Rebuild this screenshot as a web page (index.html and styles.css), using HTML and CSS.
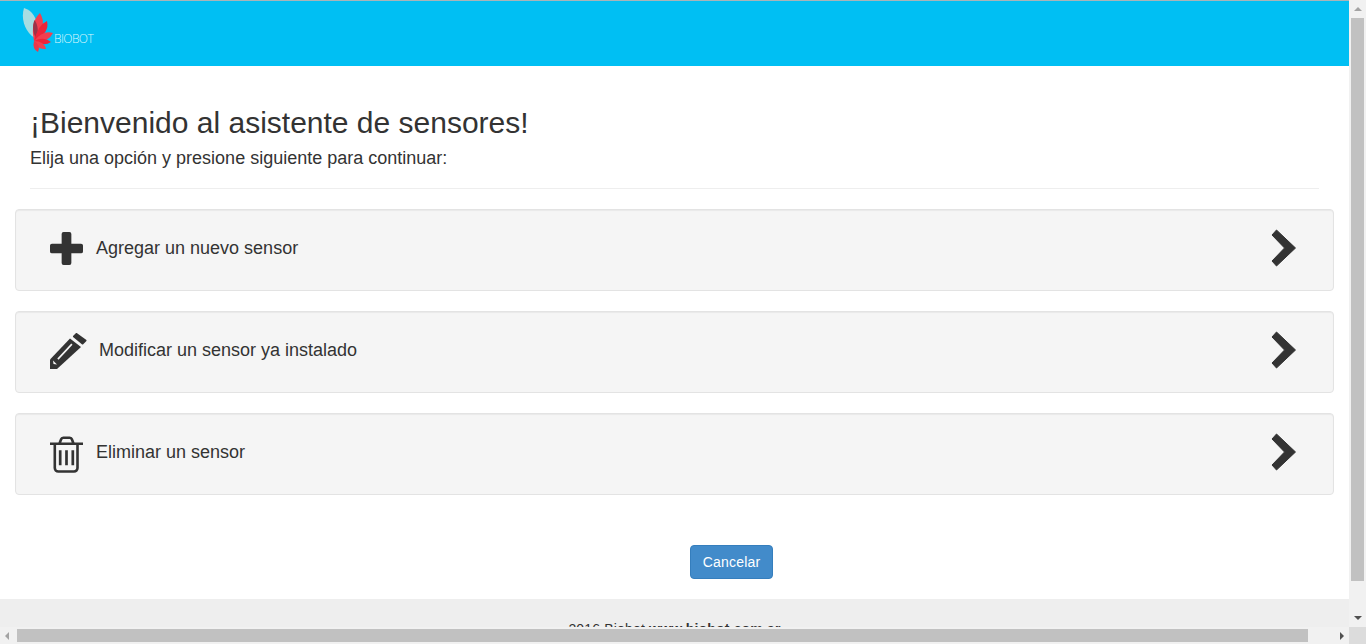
FILE: index.html
```html
<!DOCTYPE html>
<html lang="en">
<head>
  <meta charset="UTF-8">
  <title>Biobot</title>
  <link rel="stylesheet" href="styles.css">
</head>
<body>
  <div class="window">
    <div class="viewport">
      <header class="topbar">
        <a class="logo" href="#">
          <svg class="logo-mark" width="34" height="46" viewBox="0 0 34 46">
            <path d="M2 0 C12 3 18 14 15 31 C5 27 -2 13 2 0Z" fill="#a6dde2"/>
            <path d="M12 33 Q8 14 18 5 Q26 18 12 33Z" fill="#f23f4f"/>
            <path d="M12.500 12 C16 17 17 24 14 30 C11 25 10 18 12.500 12Z" fill="#9c3348"/>
            <path d="M12 33 Q16 17 25 13 Q28 25 12 33Z" fill="#ee2438"/>
            <path d="M12 33 Q21 22 31 25 Q26 35 12 33Z" fill="#f23f4f"/>
            <path d="M12 33 Q22 28 29 34 Q22 39 12 33Z" fill="#ee2438"/>
            <path d="M12 33 Q22 33 24 41 Q15 42 12 33Z" fill="#f2404f"/>
            <path d="M12 33 Q19 37 16 44 Q10 41 12 33Z" fill="#e9384a"/>
          </svg>
          <span class="logo-text">BIOBOT</span>
        </a>
      </header>

      <main class="content">
        <div class="intro">
          <h1>¡Bienvenido al asistente de sensores!</h1>
          <p>Elija una opción y presione siguiente para continuar:</p>
        </div>
        <hr class="divider">

        <div class="options">
          <a class="option" href="#">
            <svg class="icon icon-plus" width="33" height="33" viewBox="0 0 34 34">
              <path d="M14 0h6a2 2 0 0 1 2 2v10h10a2 2 0 0 1 2 2v6a2 2 0 0 1-2 2H22v10a2 2 0 0 1-2 2h-6a2 2 0 0 1-2-2V22H2a2 2 0 0 1-2-2v-6a2 2 0 0 1 2-2h10V2a2 2 0 0 1 2-2z" fill="#333"/>
            </svg>
            <span class="option-label">Agregar un nuevo sensor</span>
            <svg class="chevron" width="26" height="38" viewBox="0 0 26 38">
              <polygon points="5.500,1 24.500,19 5.500,37 1,32 13.500,19 1,6" fill="#333" stroke="#333" stroke-linejoin="round"/>
            </svg>
          </a>

          <a class="option" href="#">
            <svg class="icon icon-pencil" width="37" height="37" viewBox="0 0 37 37">
              <polygon points="24,3.500 26.500,1 35.500,7.500 32.500,10.500" fill="#333" stroke="#333" stroke-width="2" stroke-linejoin="round"/>
              <path d="M20 5.500 L31 14 L7 36 H0 V26.500z" fill="#333"/>
              <path d="M21.300 10.500 L22.500 11.700 L8.500 26.700 L7.300 25.500z" fill="#f5f5f5"/>
              <path d="M3 27.500 L7 31.500 L3.500 31z" fill="#f5f5f5"/>
            </svg>
            <span class="option-label">Modificar un sensor ya instalado</span>
            <svg class="chevron" width="26" height="38" viewBox="0 0 26 38">
              <polygon points="5.500,1 24.500,19 5.500,37 1,32 13.500,19 1,6" fill="#333" stroke="#333" stroke-linejoin="round"/>
            </svg>
          </a>

          <a class="option" href="#">
            <svg class="icon icon-trash" width="33" height="37" viewBox="0 0 33 37">
              <path d="M0 7.700 H33 M4.800 8 V32 a3.500 3.500 0 0 0 3.500 3.500 H24 a3.500 3.500 0 0 0 3.500-3.500 V8 M9.500 7.500 L11 3.500 a2.500 2.500 0 0 1 2.300-1.700 H19.700 a2.500 2.500 0 0 1 2.300 1.700 L23.500 7.500" fill="none" stroke="#333" stroke-width="2.600"/>
              <path d="M10.200 14.300 V29.300 M16.500 14.300 V29.300 M22.800 14.300 V29.300" fill="none" stroke="#333" stroke-width="2.700"/>
            </svg>
            <span class="option-label">Eliminar un sensor</span>
            <svg class="chevron" width="26" height="38" viewBox="0 0 26 38">
              <polygon points="5.500,1 24.500,19 5.500,37 1,32 13.500,19 1,6" fill="#333" stroke="#333" stroke-linejoin="round"/>
            </svg>
          </a>
        </div>

        <div class="actions">
          <button class="btn-cancel">Cancelar</button>
        </div>
      </main>

      <footer class="page-footer">
        2016 Biobot <strong>www.biobot.com.ar</strong>
      </footer>
    </div>

    <!-- Scrollbars -->
    <div class="scroll-v">
      <span class="arrow arrow-up"></span>
      <div class="thumb-v"></div>
      <span class="arrow arrow-down"></span>
    </div>
    <div class="scroll-h">
      <span class="arrow arrow-left"></span>
      <div class="thumb-h"></div>
      <span class="arrow arrow-right"></span>
    </div>
    <div class="scroll-corner"></div>
  </div>
</body>
</html>
```

FILE: styles.css
```css
* {
  margin: 0;
  padding: 0;
  box-sizing: border-box;
}

html, body {
  height: 100%;
  overflow: hidden;
}

body {
  font-family: "Liberation Sans", Arial, sans-serif;
  color: #333;
  background: #fff;
}

.window {
  display: grid;
  grid-template-columns: 1349px 17px;
  grid-template-rows: 627px 17px;
  width: 1366px;
  height: 644px;
}

.viewport {
  overflow: hidden;
  display: flex;
  flex-direction: column;
}

/* Header */
.topbar {
  height: 66px;
  flex: none;
  background: #00bff3;
  border-top: 1px solid #a9b4b8;
  padding: 7px 0 0 22px;
}

.logo {
  display: flex;
  align-items: flex-end;
  width: 90px;
  text-decoration: none;
}

.logo-mark {
  flex: none;
}

.logo-text {
  margin: 0 0 9px -2px;
  font-family: "Open Sans", sans-serif;
  font-size: 12px;
  font-weight: 300;
  line-height: 12px;
  letter-spacing: -0.6px;
  color: #d8f6fd;
}

/* Main content */
.content {
  height: 533px;
  flex: none;
  padding: 40px 15px 0;
}

.intro {
  padding: 0 15px;
}

h1 {
  font-size: 30px;
  font-weight: 400;
  line-height: 33px;
}

.intro p {
  margin-top: 9px;
  font-size: 18px;
  line-height: 20px;
}

.divider {
  margin: 20px 15px 20px;
  border: 0;
  border-top: 1px solid #eee;
}

.options {
  display: flex;
  flex-direction: column;
  gap: 20px;
}

.option {
  display: flex;
  align-items: center;
  height: 82px;
  padding: 0 36px 0 34px;
  background: #f5f5f5;
  border: 1px solid #e3e3e3;
  border-radius: 4px;
  box-shadow: inset 0 1px 1px rgba(0, 0, 0, 0.05);
  color: #333;
  text-decoration: none;
}

.option-label {
  flex: 1;
  padding-bottom: 4px;
  font-size: 18px;
  line-height: 20px;
}

.icon {
  flex: none;
}

.icon-plus {
  margin-right: 13px;
  margin-bottom: 4px;
}

.icon-pencil {
  margin-right: 12px;
  margin-bottom: 2px;
}

.icon-trash {
  margin-right: 13px;
}

.chevron {
  flex: none;
  margin-bottom: 5px;
}

.actions {
  display: flex;
  justify-content: center;
  margin-top: 50px;
  padding-left: 114px;
}

.btn-cancel {
  width: 83px;
  height: 34px;
  background: #428bca;
  border: 1px solid #357ebd;
  border-radius: 4px;
  color: #fff;
  font-family: inherit;
  font-size: 14px;
  letter-spacing: 0.2px;
  cursor: pointer;
}

/* Footer, cut off by the bottom of the window */
.page-footer {
  flex: 1;
  min-height: 60px;
  padding-top: 20px;
  background: #eee;
  text-align: center;
  font-size: 14px;
  line-height: 20px;
  letter-spacing: 0.17px;
}

/* Scrollbars */
.scroll-v {
  display: flex;
  flex-direction: column;
  align-items: center;
  background: #f1f1f1;
}

.thumb-v {
  width: 13px;
  height: 563px;
  margin-top: 7px;
  background: #c1c1c1;
}

.scroll-h {
  display: flex;
  align-items: center;
  background: #f1f1f1;
}

.thumb-h {
  width: 1291px;
  height: 13px;
  margin-left: 8px;
  background: #c1c1c1;
}

.scroll-corner {
  background: #dcdcdc;
}

.arrow {
  display: block;
  width: 0;
  height: 0;
  flex: none;
  border-style: solid;
  border-color: transparent;
}

.arrow-up {
  margin-top: 7px;
  border-width: 0 4px 4px;
  border-bottom-color: #a3a3a3;
}

.arrow-down {
  margin-top: auto;
  margin-bottom: 7px;
  border-width: 4px 4px 0;
  border-top-color: #505050;
}

.arrow-left {
  margin-left: 5px;
  border-width: 4px 4px 4px 0;
  border-right-color: #a3a3a3;
}

.arrow-right {
  margin-left: auto;
  margin-right: 5px;
  border-width: 4px 0 4px 4px;
  border-left-color: #505050;
}
```
